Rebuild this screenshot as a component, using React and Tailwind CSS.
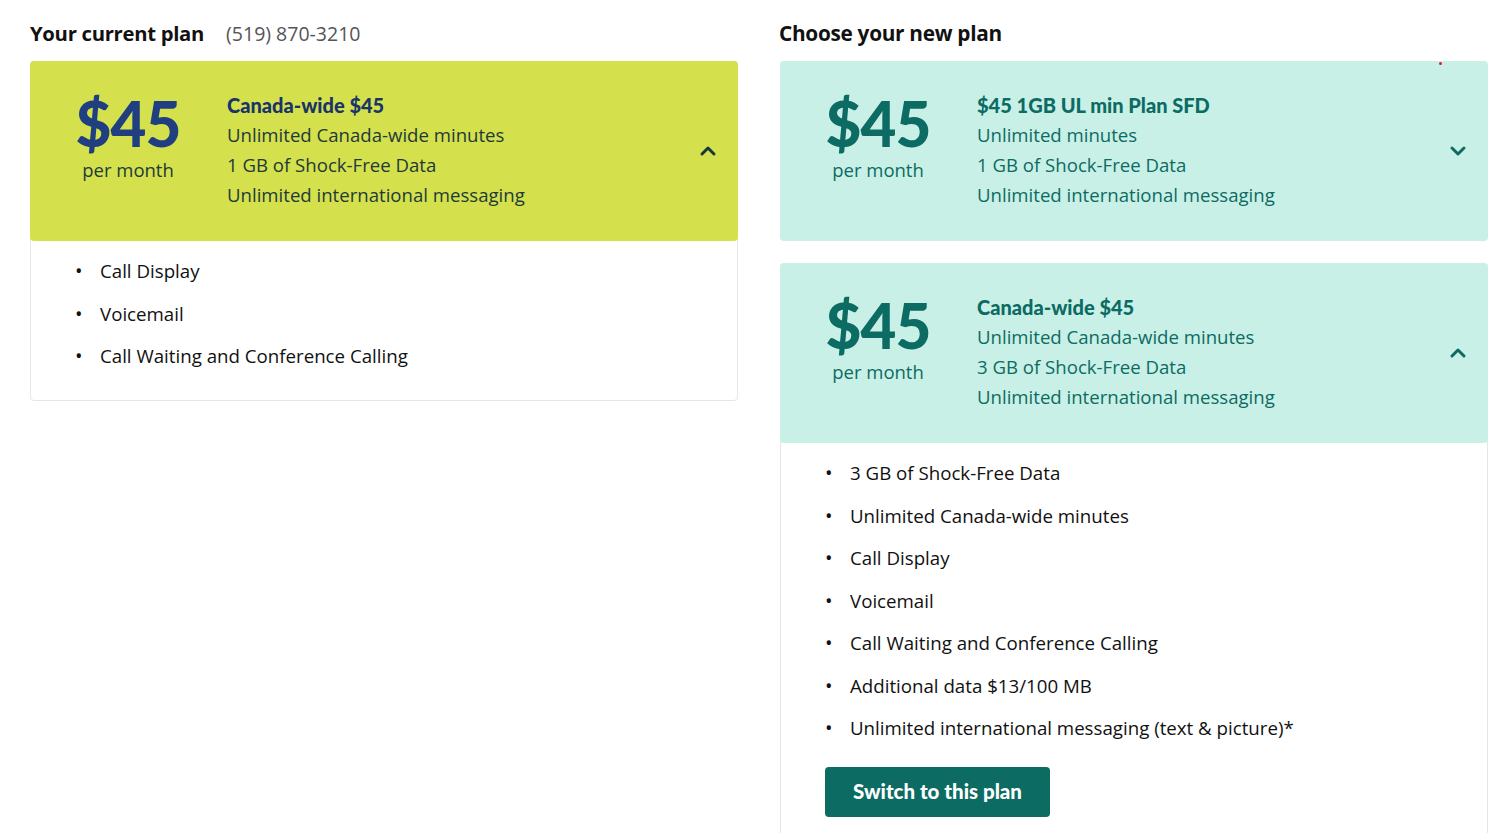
import { ChevronUp, ChevronDown } from "lucide-react";

const body = { fontFamily: '"Open Sans", "Liberation Sans", sans-serif' };
const heavy = { fontFamily: 'Lato, "Liberation Sans", sans-serif' };

function PlanHeader({ tone, title, lines, open }) {
  const lime = tone === "lime";
  return (
    <div
      className={`flex items-start rounded-[4px] h-[180px] pt-[29px] pl-[30px] pr-[18px] ${
        lime ? "bg-[#d4e04c]" : "bg-[#c9f0e6]"
      }`}
    >
      <div className="w-[136px] flex flex-col items-center">
        <div
          style={heavy}
          className={`mt-[3px] text-[62px] leading-[60px] font-black tracking-[-1px] ${
            lime ? "text-[#1f3f80]" : "text-[#0c6b63]"
          }`}
        >
          $45
        </div>
        <div
          style={body}
          className={`mt-[5px] text-[18.5px] leading-[24px] ${lime ? "text-[#1e3a3a]" : "text-[#0c6b63]"}`}
        >
          per month
        </div>
      </div>
      <div className="ml-[31px] flex-1">
        <div
          style={heavy}
          className={`text-[20px] leading-[30px] font-black ${lime ? "text-[#1a3469]" : "text-[#0c6b63]"}`}
        >
          {title}
        </div>
        {lines.map((l) => (
          <div
            key={l}
            style={body}
            className={`text-[18.6px] leading-[30px] ${lime ? "text-[#1e3a3a]" : "text-[#0c6b63]"}`}
          >
            {l}
          </div>
        ))}
      </div>
      <div className="self-center -mt-[29px]">
        {open ? (
          <ChevronUp className={`w-6 h-6 ${lime ? "text-[#17383a]" : "text-[#0c6b63]"}`} strokeWidth={3} />
        ) : (
          <ChevronDown className="w-6 h-6 text-[#0c6b63]" strokeWidth={3} />
        )}
      </div>
    </div>
  );
}

function Features({ items }) {
  return (
    <ul className="pt-[10px]">
      {items.map((it) => (
        <li key={it} style={body} className="flex text-[18.7px] leading-[42.5px] text-[#111]">
          <span className="w-[69px] pl-[44px] text-[20px]">•</span>
          <span>{it}</span>
        </li>
      ))}
    </ul>
  );
}

export default function App() {
  return (
    <div className="min-h-[833px] bg-white overflow-hidden">
      <div className="flex gap-[42px] pl-[30px] pt-[18px]">
        {/* Current plan */}
        <div className="w-[708px]">
          <div className="flex items-baseline h-[32px]">
            <h2 style={body} className="text-[20.3px] font-bold text-[#111] tracking-[-0.3px]">
              Your current plan
            </h2>
            <span style={body} className="ml-[22px] text-[19.5px] text-[#555]">
              (519) 870-3210
            </span>
          </div>
          <div className="mt-[11px] border border-[#e6e6e6] rounded-[4px] pb-[22px]">
            <div className="-m-px">
              <PlanHeader
                tone="lime"
                title="Canada-wide $45"
                lines={["Unlimited Canada-wide minutes", "1 GB of Shock-Free Data", "Unlimited international messaging"]}
                open
              />
            </div>
            <Features items={["Call Display", "Voicemail", "Call Waiting and Conference Calling"]} />
          </div>
        </div>

        {/* New plan */}
        <div className="w-[708px]">
          <div className="flex items-baseline h-[32px]">
            <h2 style={body} className="-ml-px text-[20.8px] font-bold text-[#111] tracking-[-0.3px]">
              Choose your new plan
            </h2>
          </div>
          <div className="mt-[11px] relative">
            <PlanHeader
              tone="mint"
              title="$45 1GB UL min Plan SFD"
              lines={["Unlimited minutes", "1 GB of Shock-Free Data", "Unlimited international messaging"]}
            />
            <span className="absolute top-[1px] left-[659px] w-[3px] h-[3px] rounded-full bg-[#d0202a]" />
          </div>
          <div className="mt-[22px] border border-[#e6e6e6] rounded-[4px] pb-[40px]">
            <div className="-m-px">
              <PlanHeader
                tone="mint"
                title="Canada-wide $45"
                lines={["Unlimited Canada-wide minutes", "3 GB of Shock-Free Data", "Unlimited international messaging"]}
                open
              />
            </div>
            <Features
              items={[
                "3 GB of Shock-Free Data",
                "Unlimited Canada-wide minutes",
                "Call Display",
                "Voicemail",
                "Call Waiting and Conference Calling",
                "Additional data $13/100 MB",
                "Unlimited international messaging (text & picture)*",
              ]}
            />
            <button
              style={heavy}
              className="mt-[17px] ml-[44px] w-[225px] h-[50px] rounded-[4px] bg-[#0c6b63] text-white text-[20.5px] font-black"
            >
              Switch to this plan
            </button>
          </div>
        </div>
      </div>
    </div>
  );
}
